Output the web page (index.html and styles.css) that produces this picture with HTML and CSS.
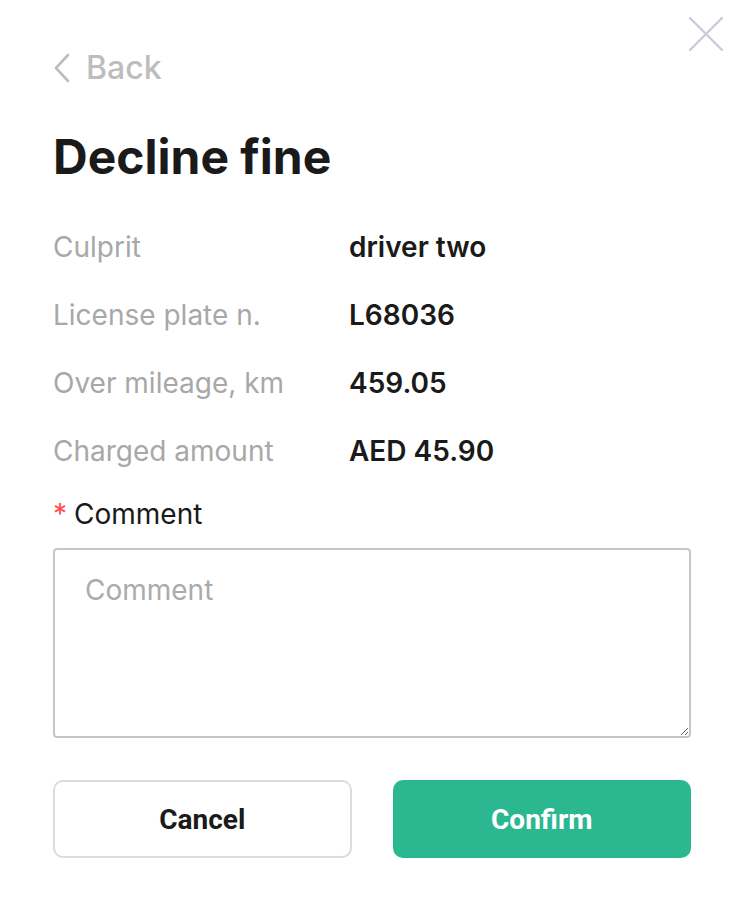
FILE: index.html
```html
<!DOCTYPE html>
<html lang="en">
<head>
    <meta charset="UTF-8">
    <meta name="viewport" content="width=device-width, initial-scale=1.0">
    <title>Decline fine</title>
    <link rel="stylesheet" href="styles.css">
</head>
<body>
    <div class="modal">
        <button class="close-btn" aria-label="Close">
            <svg width="34" height="34" viewBox="0 0 34 34">
                <path d="M1 1 L33 33 M33 1 L1 33" stroke="#c9cdd9" stroke-width="2.4" stroke-linecap="round" fill="none"/>
            </svg>
        </button>

        <a class="back" href="#">
            <svg class="back-icon" width="18" height="30" viewBox="0 0 18 30">
                <path d="M15 2 L3 15 L15 28" stroke="#bdbdbd" stroke-width="2.6" stroke-linecap="round" stroke-linejoin="round" fill="none"/>
            </svg>
            <span>Back</span>
        </a>

        <h1 class="title">Decline fine</h1>

        <div class="details">
            <div class="label">Culprit</div>
            <div class="value">driver two</div>
            <div class="label">License plate n.</div>
            <div class="value">L68036</div>
            <div class="label">Over mileage, km</div>
            <div class="value">459.05</div>
            <div class="label">Charged amount</div>
            <div class="value">AED 45.90</div>
        </div>

        <label class="comment-label" for="comment"><span class="req">*</span>Comment</label>
        <textarea id="comment" class="comment" placeholder="Comment"></textarea>

        <div class="actions">
            <button class="btn btn-cancel">Cancel</button>
            <button class="btn btn-confirm">Confirm</button>
        </div>
    </div>
</body>
</html>
```

FILE: styles.css
```css
body {
    margin: 0;
    background-color: #ffffff;
    font-family: Inter, "Noto Sans", sans-serif;
    color: #1a1a1a;
}
.modal {
    position: relative;
    display: flex;
    flex-direction: column;
    padding: 47px 61px 40px 53px;
}
.close-btn {
    position: absolute;
    top: 17px;
    right: 29px;
    padding: 0;
    border: none;
    background: none;
    cursor: pointer;
    line-height: 0;
}
.back {
    display: flex;
    align-items: center;
    gap: 15px;
    height: 40px;
    color: #bdbdbd;
    font-size: 32px;
    font-weight: 500;
    text-decoration: none;
}
.back-icon {
    margin-top: 1px;
}
.title {
    margin: 41px 0 0 0;
    font-size: 48px;
    line-height: 58px;
    font-weight: 700;
    color: #1a1a1a;
}
.details {
    display: grid;
    grid-template-columns: 296px 1fr;
    grid-auto-rows: 68px;
    align-items: center;
    margin-top: 27px;
    font-size: 28px;
}
.label {
    color: #a8a8a8;
}
.value {
    font-weight: 600;
    color: #1a1a1a;
}
.comment-label {
    margin-top: 9px;
    font-size: 28px;
    line-height: 40px;
    color: #1a1a1a;
}
.req {
    color: #ff4d4f;
    margin-right: 7px;
}
.comment {
    box-sizing: border-box;
    margin-top: 14px;
    height: 190px;
    width: 100%;
    padding: 23px 30px;
    border: 2px solid #c6c6c6;
    border-radius: 4px;
    font-family: Inter, "Noto Sans", sans-serif;
    font-size: 28px;
    line-height: 34px;
    color: #1a1a1a;
}
.comment::placeholder {
    color: #ababab;
}
.actions {
    display: flex;
    gap: 41px;
    margin-top: 42px;
}
.btn {
    flex: 1 1 0;
    box-sizing: border-box;
    min-width: 0;
    height: 78px;
    border-radius: 10px;
    font-family: Roboto, "Liberation Sans", sans-serif;
    font-size: 28px;
    font-weight: 700;
    cursor: pointer;
}
.btn-cancel {
    background-color: #ffffff;
    border: 2px solid #dcdcdc;
    color: #1a1a1a;
}
.btn-confirm {
    background-color: #2bb891;
    border: 2px solid #2bb891;
    color: #ffffff;
}
```
